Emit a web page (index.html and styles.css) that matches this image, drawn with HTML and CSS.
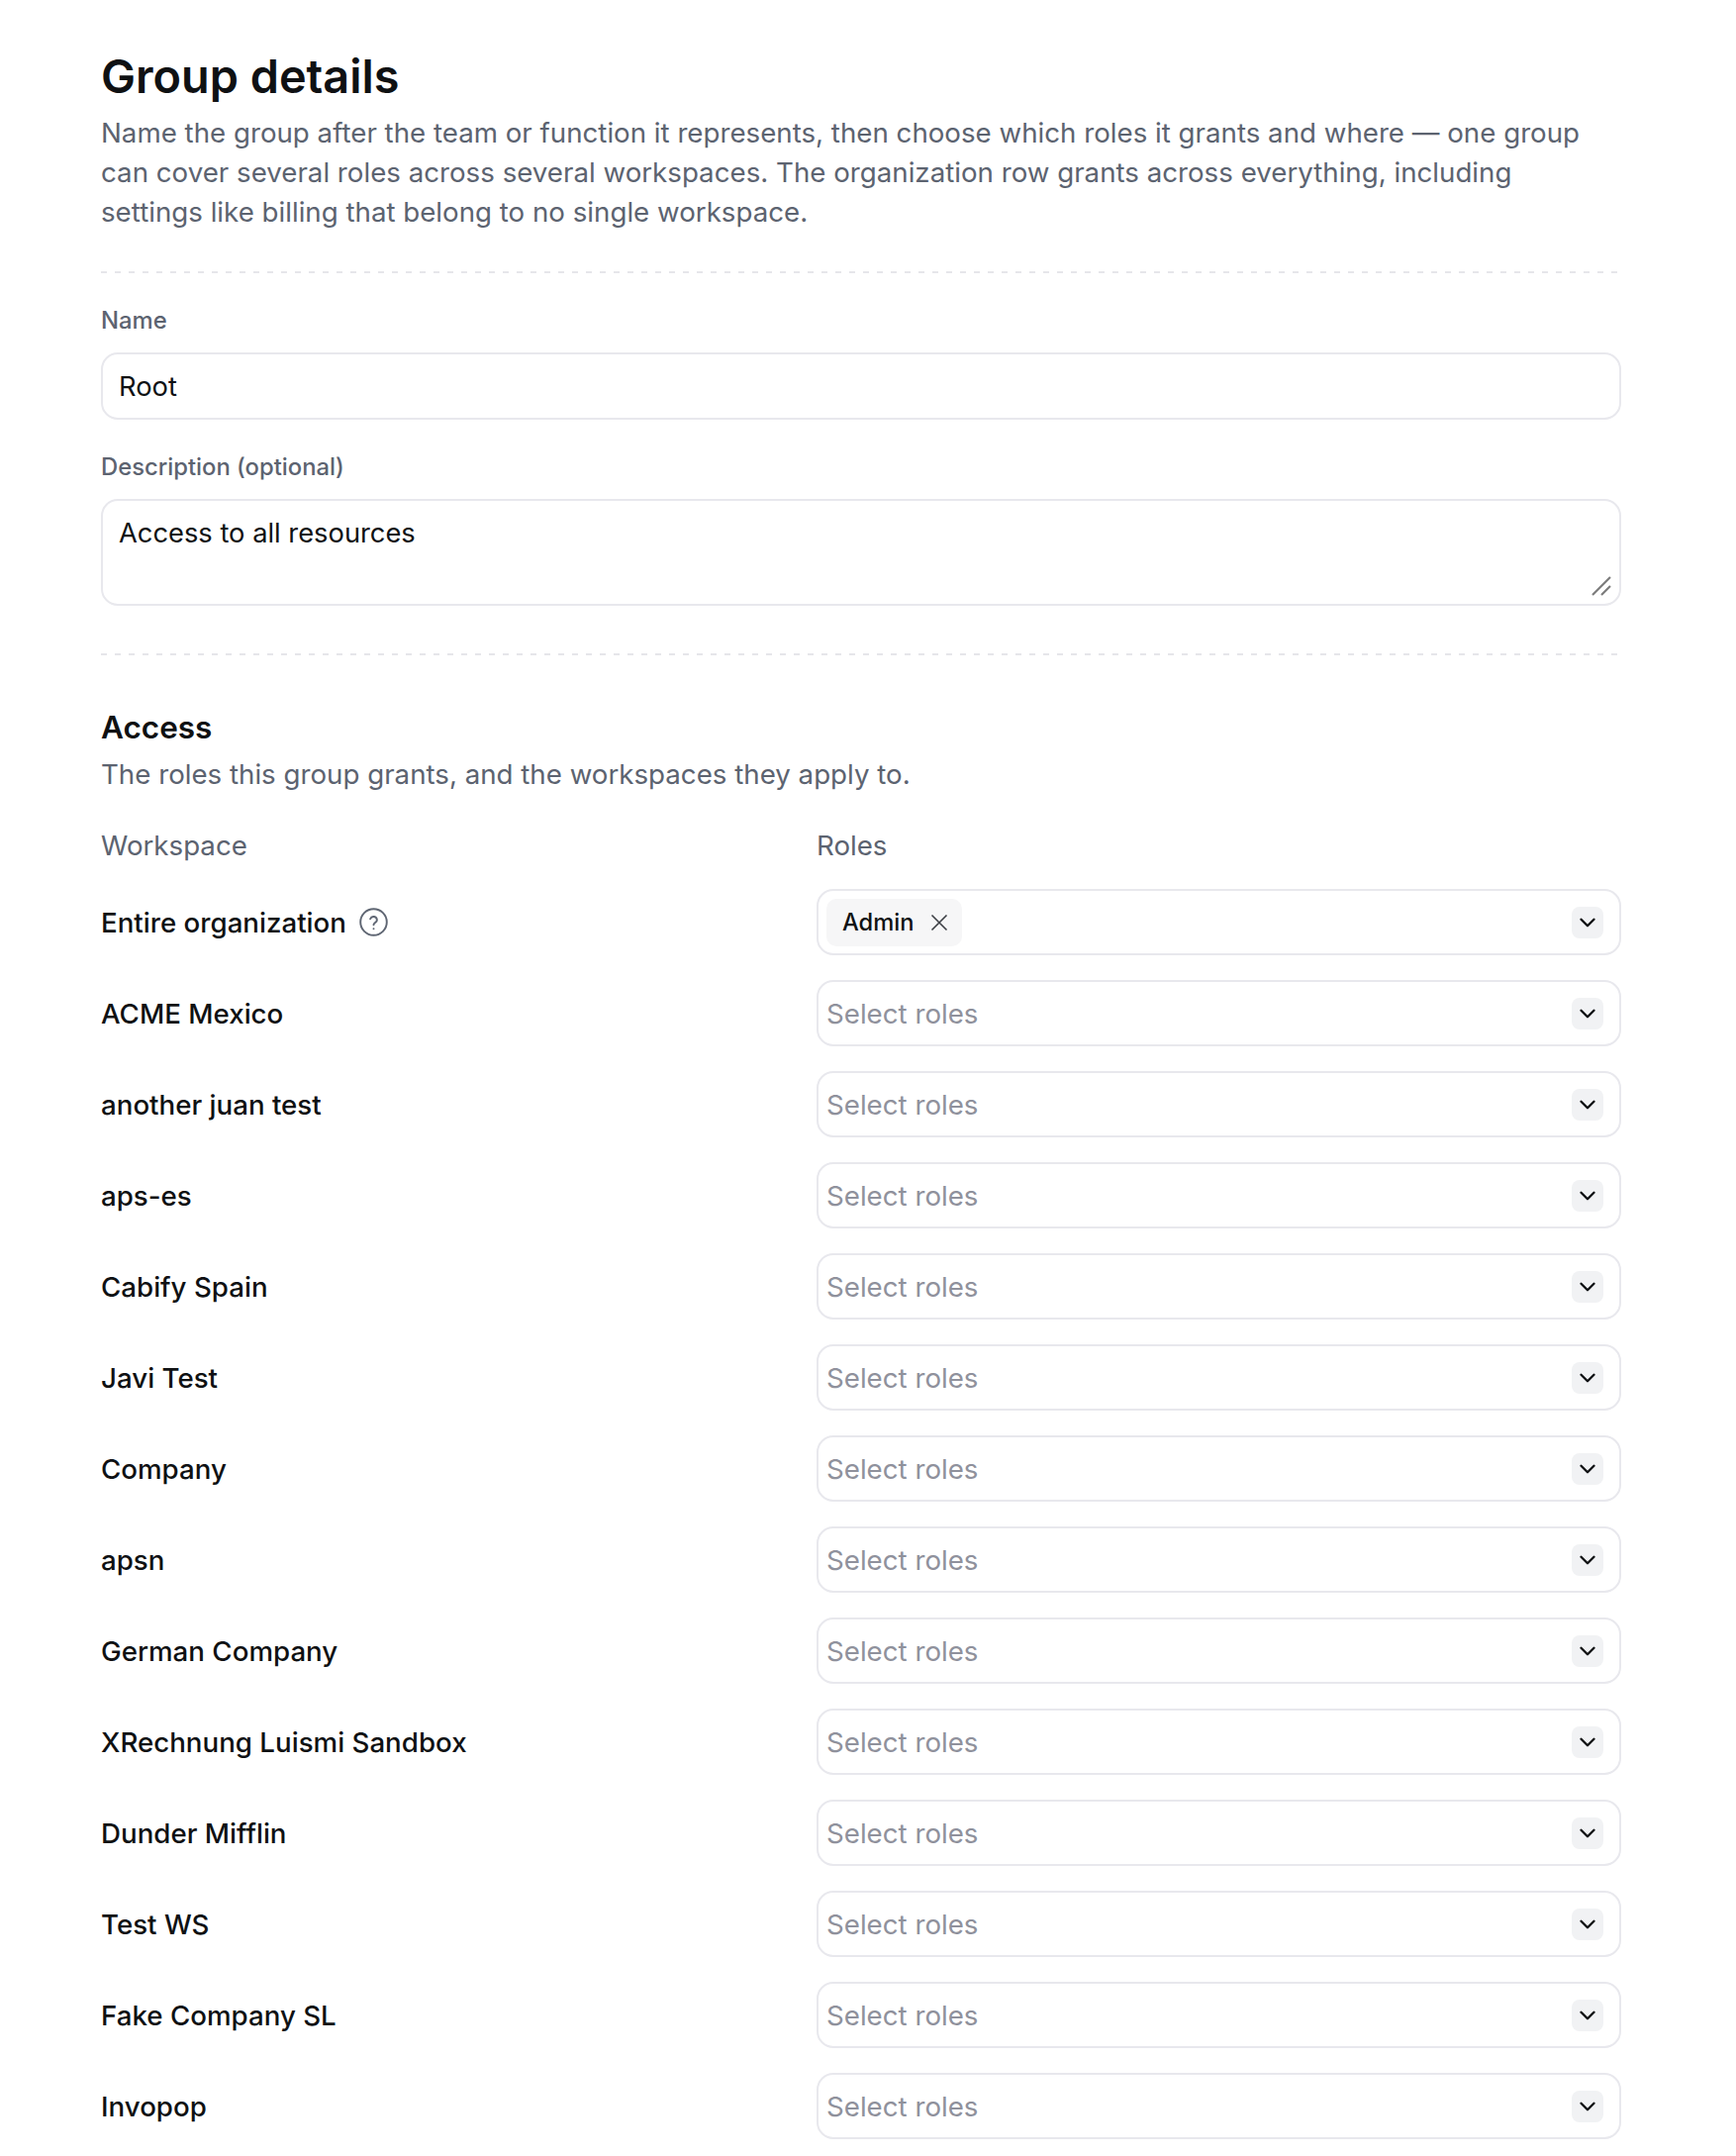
FILE: index.html
```html
<!DOCTYPE html>
<html lang="en">
<head>
<meta charset="utf-8">
<title>Group details</title>
<link rel="stylesheet" href="styles.css">
</head>
<body>
<main class="page">
  <header class="intro">
    <h1 class="title">Group details</h1>
    <p class="lead">Name the group after the team or function it represents, then choose which roles it grants and where — one group can cover several roles across several workspaces. The organization row grants across everything, including settings like billing that belong to no single workspace.</p>
  </header>
  <hr class="rule rule-top">
  <section class="fields">
    <label class="field">
      <span class="label">Name</span>
      <input class="control input" type="text" value="Root">
    </label>
    <label class="field">
      <span class="label">Description (optional)</span>
      <span class="area-wrap">
        <textarea class="control area">Access to all resources</textarea>
        <svg class="grip" viewBox="0 0 20 20" aria-hidden="true"><path d="M1 19 19 1M10 19l9-9"/></svg>
      </span>
    </label>
  </section>
  <hr class="rule rule-bottom">
  <section class="access">
    <h2 class="subtitle">Access</h2>
    <p class="sub-lead">The roles this group grants, and the workspaces they apply to.</p>
    <div class="grid">
      <div class="head">Workspace</div>
      <div class="head">Roles</div>

      <div class="ws">Entire organization
        <svg class="help" viewBox="0 0 24 24" aria-hidden="true"><circle cx="12" cy="12" r="11"/><path d="M9.2 9.3a2.9 2.9 0 0 1 5.6 1c0 1.9-2.8 2.4-2.8 4"/><path d="M12 17.6h.01"/></svg>
      </div>
      <div class="select"><span class="tag">Admin<svg class="tag-x" viewBox="0 0 18 18" aria-hidden="true"><path d="M1.5 1.5l15 15M16.5 1.5l-15 15"/></svg></span><span class="chev"><svg viewBox="0 0 24 24" aria-hidden="true"><path d="m6 9 6 6 6-6"/></svg></span></div>

      <div class="ws">ACME Mexico</div>
      <div class="select"><span class="ph">Select roles</span><span class="chev"><svg viewBox="0 0 24 24" aria-hidden="true"><path d="m6 9 6 6 6-6"/></svg></span></div>
      <div class="ws">another juan test</div>
      <div class="select"><span class="ph">Select roles</span><span class="chev"><svg viewBox="0 0 24 24" aria-hidden="true"><path d="m6 9 6 6 6-6"/></svg></span></div>
      <div class="ws">aps-es</div>
      <div class="select"><span class="ph">Select roles</span><span class="chev"><svg viewBox="0 0 24 24" aria-hidden="true"><path d="m6 9 6 6 6-6"/></svg></span></div>
      <div class="ws">Cabify Spain</div>
      <div class="select"><span class="ph">Select roles</span><span class="chev"><svg viewBox="0 0 24 24" aria-hidden="true"><path d="m6 9 6 6 6-6"/></svg></span></div>
      <div class="ws">Javi Test</div>
      <div class="select"><span class="ph">Select roles</span><span class="chev"><svg viewBox="0 0 24 24" aria-hidden="true"><path d="m6 9 6 6 6-6"/></svg></span></div>
      <div class="ws">Company</div>
      <div class="select"><span class="ph">Select roles</span><span class="chev"><svg viewBox="0 0 24 24" aria-hidden="true"><path d="m6 9 6 6 6-6"/></svg></span></div>
      <div class="ws">apsn</div>
      <div class="select"><span class="ph">Select roles</span><span class="chev"><svg viewBox="0 0 24 24" aria-hidden="true"><path d="m6 9 6 6 6-6"/></svg></span></div>
      <div class="ws">German Company</div>
      <div class="select"><span class="ph">Select roles</span><span class="chev"><svg viewBox="0 0 24 24" aria-hidden="true"><path d="m6 9 6 6 6-6"/></svg></span></div>
      <div class="ws">XRechnung Luismi Sandbox</div>
      <div class="select"><span class="ph">Select roles</span><span class="chev"><svg viewBox="0 0 24 24" aria-hidden="true"><path d="m6 9 6 6 6-6"/></svg></span></div>
      <div class="ws">Dunder Mifflin</div>
      <div class="select"><span class="ph">Select roles</span><span class="chev"><svg viewBox="0 0 24 24" aria-hidden="true"><path d="m6 9 6 6 6-6"/></svg></span></div>
      <div class="ws">Test WS</div>
      <div class="select"><span class="ph">Select roles</span><span class="chev"><svg viewBox="0 0 24 24" aria-hidden="true"><path d="m6 9 6 6 6-6"/></svg></span></div>
      <div class="ws">Fake Company SL</div>
      <div class="select"><span class="ph">Select roles</span><span class="chev"><svg viewBox="0 0 24 24" aria-hidden="true"><path d="m6 9 6 6 6-6"/></svg></span></div>
      <div class="ws">Invopop</div>
      <div class="select"><span class="ph">Select roles</span><span class="chev"><svg viewBox="0 0 24 24" aria-hidden="true"><path d="m6 9 6 6 6-6"/></svg></span></div>
    </div>
  </section>
</main>
</body>
</html>
```
FILE: styles.css
```css
* { box-sizing: border-box; }
html, body { margin: 0; background: #fff; }
body {
  font-family: Inter, "Liberation Sans", sans-serif;
  color: #0f1113;
  font-size: 22.2px;
  -webkit-font-smoothing: antialiased;
}
.page { width: 1754px; padding: 50px 116px 0 102px; }
.title { margin: 0; font-size: 46.8px; line-height: 54px; font-weight: 600; }
.lead { margin: 10px 0 0; font-size: 27.7px; line-height: 40px; color: #5c6370; }
.rule {
  height: 2px; margin: 0; border: 0;
  background: repeating-linear-gradient(90deg, #e6e6ea 0 6px, transparent 6px 14px);
}
.rule-top { margin-top: 40px; }
.rule-bottom { margin-top: 48px; }
.fields { display: flex; flex-direction: column; gap: 31.5px; margin-top: 31px; }
.field { display: flex; flex-direction: column; gap: 16px; }
.label { font-size: 23.8px; line-height: 33px; font-weight: 500; color: #5c6370; }
.control {
  display: block; width: 100%; margin: 0;
  font: inherit; font-size: 27.3px; color: #0f1113;
  background: #fff; border: 2px solid #e8e8ed; border-radius: 17px;
  padding: 0 16px; outline: none;
}
.input { height: 67.5px; padding-top: 1px; }
.area-wrap { position: relative; display: block; }
.area { height: 108px; padding-top: 12.5px; line-height: 40px; resize: none; overflow: hidden; }
.grip { position: absolute; right: 10px; bottom: 10px; width: 20px; height: 20px; fill: none; stroke: #7c7c7c; stroke-width: 2.2; }
.access { margin-top: 51px; }
.subtitle { margin: 0; font-size: 31.5px; line-height: 44px; font-weight: 600; }
.sub-lead { margin: 5px 0 0; font-size: 27.7px; line-height: 40px; color: #5c6370; }
.grid {
  display: grid; grid-template-columns: 723px 813px; grid-template-rows: 39.4px;
  grid-auto-rows: 67px; row-gap: 25px; margin-top: 32px; align-items: center;
}
.head { font-size: 27.7px; color: #5c6370; line-height: 40px; align-self: start; }
.ws { font-size: 27.7px; font-weight: 500; display: flex; align-items: center; gap: 13px; }
.help { width: 29px; height: 29px; fill: none; stroke: #5f6673; stroke-width: 1.6; stroke-linecap: round; }
.select {
  height: 67px; display: flex; align-items: center; justify-content: space-between;
  border: 2px solid #e8e8ed; border-radius: 17px; padding: 0 16px 0 8px;
}
.ph { font-size: 27.7px; color: #8f919c; }
.tag {
  display: flex; align-items: center; gap: 16px; height: 48px; width: 137px;
  padding: 0 15px 0 16px; border-radius: 10px; background: #f6f6f7;
  font-size: 23.7px; font-weight: 500;
}
.tag-x { width: 18px; height: 18px; fill: none; stroke: #3c3f45; stroke-width: 1.6; flex: none; }
.chev { width: 32px; height: 32px; border-radius: 8px; background: #f1f2f4; display: flex; align-items: center; justify-content: center; }
.chev svg { width: 26px; height: 26px; fill: none; stroke: #0f1113; stroke-width: 2.2; stroke-linecap: round; stroke-linejoin: round; }
```
